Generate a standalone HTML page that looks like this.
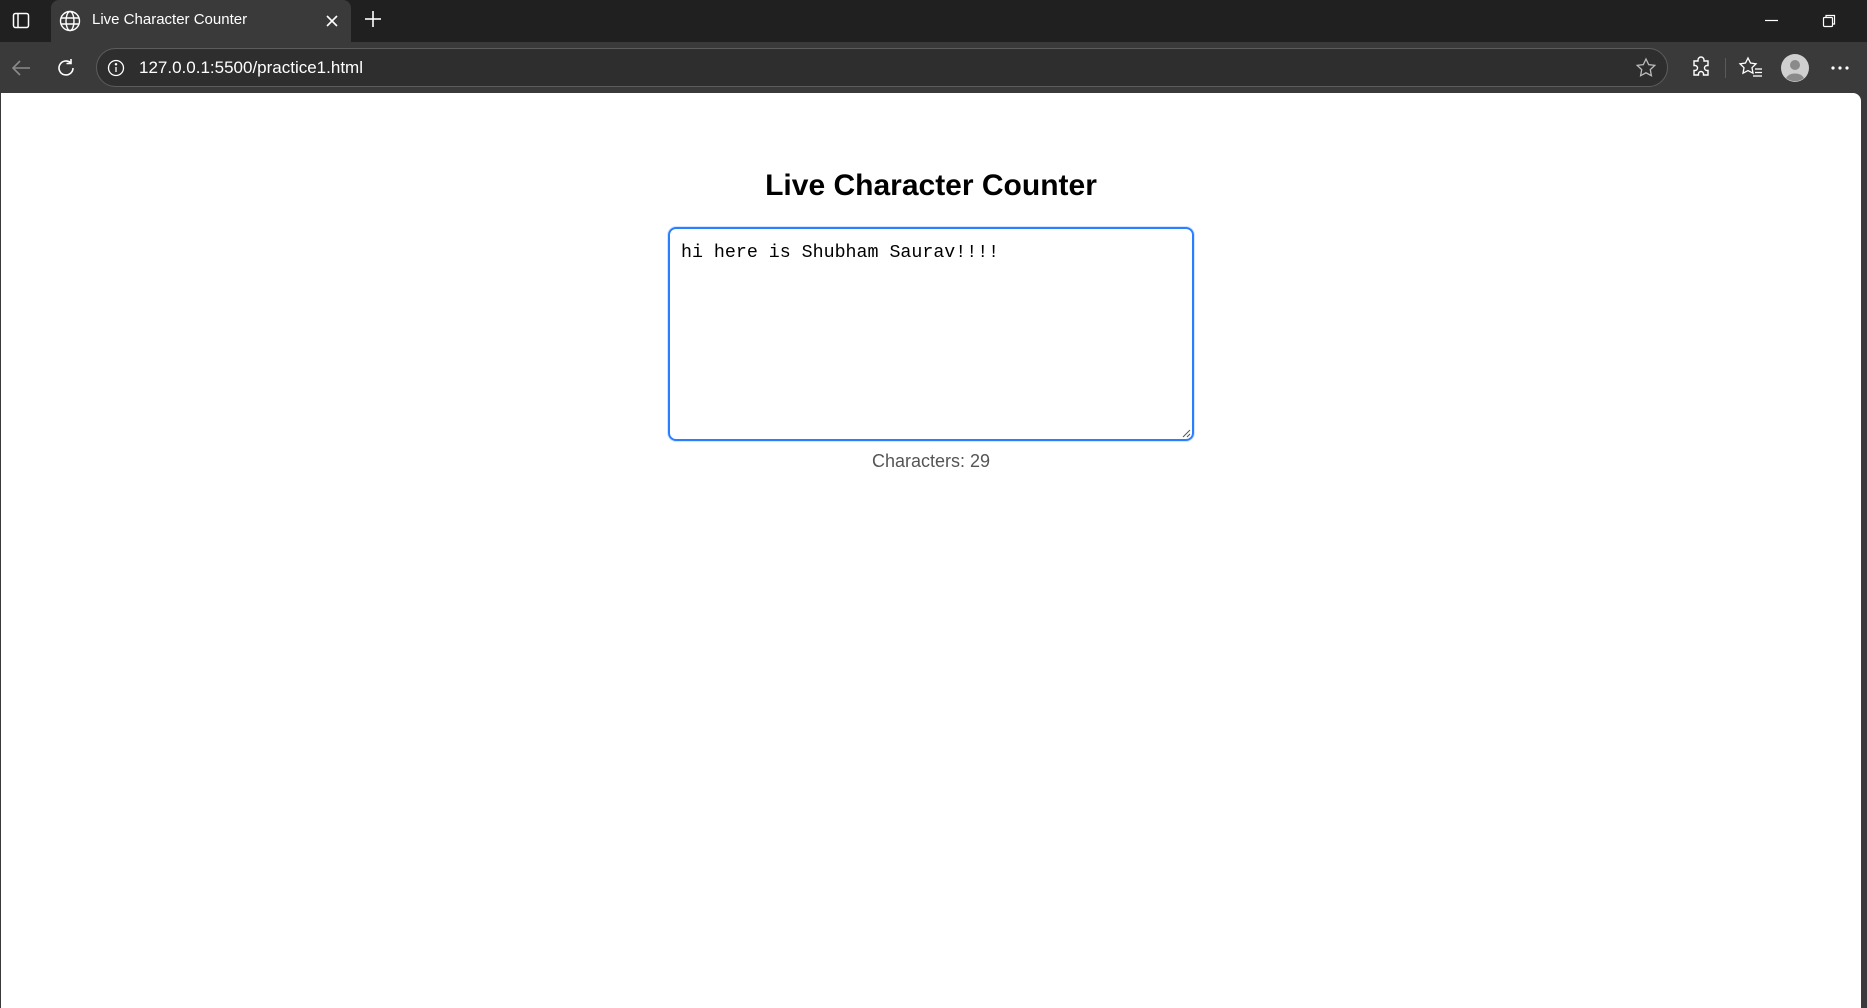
<!DOCTYPE html>
<html><head><meta charset="utf-8"><style>
*{margin:0;padding:0;box-sizing:border-box}
html,body{width:1867px;height:1008px;overflow:hidden;background:#3a3a3a;font-family:"Liberation Sans",Arial,sans-serif}
.tabbar{position:absolute;left:0;top:0;width:1867px;height:42px;background:#202020}
.tab{position:absolute;left:51px;top:0;width:300px;height:42px;background:#3a3a3a;border-radius:8px 8px 0 0}
.tab .t{position:absolute;left:41px;top:11px;color:#fff;font-size:15px}
.toolbar{position:absolute;left:0;top:42px;width:1867px;height:51px;background:#3a3a3a}
.pill{position:absolute;left:96px;top:48px;width:1572px;height:39px;border:1px solid #5c5c5c;border-radius:20px;background:#2e2e2e}
.url{position:absolute;left:139px;top:58px;color:#fff;font-size:17px}
.page{position:absolute;left:1px;top:93px;width:1860px;height:915px;background:#fff;border-radius:0 8px 0 0}
h1{position:absolute;left:0;width:1862px;top:169px;text-align:center;font-size:30px;font-weight:bold;color:#000}
.ta{position:absolute;left:668px;top:227px;width:526px;height:214px;border:2px solid #2a7fff;border-radius:8px;box-shadow:0 0 0 1px #d6e6fd}
.ta .txt{position:absolute;left:11px;top:14px;font-family:"Liberation Mono","DejaVu Sans Mono",monospace;font-size:18.3px;color:#000;white-space:pre}
.cnt{position:absolute;left:0;width:1862px;top:451px;text-align:center;font-size:18px;color:#555}
svg{position:absolute}
</style></head><body>
<div class="tabbar"></div>
<svg style="left:12px;top:12px" width="18" height="18" viewBox="0 0 18 18"><rect x="1.5" y="1.5" width="15" height="14" rx="2" fill="none" stroke="#fff" stroke-width="1.5"/><line x1="6" y1="2" x2="6" y2="15" stroke="#fff" stroke-width="1.5"/></svg>
<div class="tab"><span class="t">Live Character Counter</span></div>
<svg style="left:59px;top:10px" width="22" height="22" viewBox="0 0 22 22" fill="none" stroke="#fff" stroke-width="1.4"><circle cx="11" cy="11" r="9.5"/><ellipse cx="11" cy="11" rx="4" ry="9.5"/><line x1="1.5" y1="8" x2="20.5" y2="8"/><line x1="1.5" y1="14" x2="20.5" y2="14"/></svg>
<svg style="left:325px;top:14px" width="14" height="14" viewBox="0 0 14 14" stroke="#fff" stroke-width="1.6"><line x1="2" y1="2" x2="12" y2="12"/><line x1="12" y1="2" x2="2" y2="12"/></svg>
<svg style="left:364px;top:10px" width="18" height="18" viewBox="0 0 18 18" stroke="#fff" stroke-width="1.6"><line x1="9" y1="1" x2="9" y2="17"/><line x1="1" y1="9" x2="17" y2="9"/></svg>
<svg style="left:1764px;top:14px" width="16" height="12"><line x1="1" y1="6.5" x2="14" y2="6.5" stroke="#fff" stroke-width="1.2"/></svg>
<svg style="left:1822px;top:14px" width="14" height="14" fill="none" stroke="#fff" stroke-width="1.2"><rect x="1.5" y="3.5" width="9" height="9" rx="1"/><path d="M4 3.5V1.5h8.5V10h-2"/></svg>
<div class="toolbar"></div>
<svg style="left:10px;top:57px" width="22" height="22" fill="none" stroke="#8a8a8a" stroke-width="1.6"><path d="M20 11H3M10 4l-7 7 7 7"/></svg>
<svg style="left:55px;top:57px" width="22" height="22" fill="none" stroke="#fff" stroke-width="1.6"><path d="M18 11a7 7 0 1 1-2.5-5.4M16 2v4.5h-4.5"/></svg>
<div class="pill"></div>
<svg style="left:106px;top:58px" width="20" height="20" fill="none" stroke="#fff" stroke-width="1.3"><circle cx="10" cy="10" r="7.5"/><line x1="10" y1="9" x2="10" y2="14"/><circle cx="10" cy="6.3" r=".6" fill="#fff"/></svg>
<div class="url">127.0.0.1:5500/practice1.html</div>
<svg style="left:1635px;top:57px" width="22" height="22" fill="none" stroke="#bbb" stroke-width="1.3"><path d="M11 2l2.7 5.6 6.1.8-4.5 4.2 1.1 6.1L11 15.8l-5.4 2.9 1.1-6.1L2.2 8.4l6.1-.8z"/></svg>
<svg style="left:1689px;top:56px" width="24" height="24" fill="none" stroke="#fff" stroke-width="1.4"><path d="M9 4a3 3 0 0 1 6 0v1h4v4.5h-1a2.5 2.5 0 0 0 0 5h1V19h-4.5v-1a2.5 2.5 0 0 0-5 0v1H5v-4.5h1a2.5 2.5 0 0 0 0-5H5V5h4z"/></svg>
<div style="position:absolute;left:1725px;top:58px;width:1px;height:20px;background:#5a5a5a"></div>
<svg style="left:1738px;top:56px" width="26" height="24" fill="none" stroke="#fff" stroke-width="1.3"><path d="M10 2l2.5 5 5.5.8-4 3.9 1 5.5L10 14.6l-5 2.6 1-5.5-4-3.9 5.5-.8z"/><line x1="17" y1="13" x2="24" y2="13"/><line x1="17" y1="16.5" x2="24" y2="16.5"/><line x1="15" y1="20" x2="24" y2="20"/></svg>
<svg style="left:1781px;top:54px" width="28" height="28"><circle cx="14" cy="14" r="14" fill="#cfcfcf"/><circle cx="14" cy="11" r="5" fill="#8a8a8a"/><path d="M5 24a10 8 0 0 1 18 0 14 14 0 0 1-18 0z" fill="#8a8a8a"/></svg>
<svg style="left:1830px;top:64px" width="20" height="8" fill="#fff"><circle cx="3" cy="4" r="1.6"/><circle cx="10" cy="4" r="1.6"/><circle cx="17" cy="4" r="1.6"/></svg>
<div class="page"></div>
<h1>Live Character Counter</h1>
<div class="ta"><div class="txt">hi here is Shubham Saurav!!!!</div>
<svg style="right:1px;bottom:1px" width="10" height="10" stroke="#555" stroke-width="1"><line x1="9" y1="2" x2="2" y2="9"/><line x1="9" y1="6" x2="6" y2="9"/></svg></div>
<div class="cnt">Characters: 29</div>
</body></html>
